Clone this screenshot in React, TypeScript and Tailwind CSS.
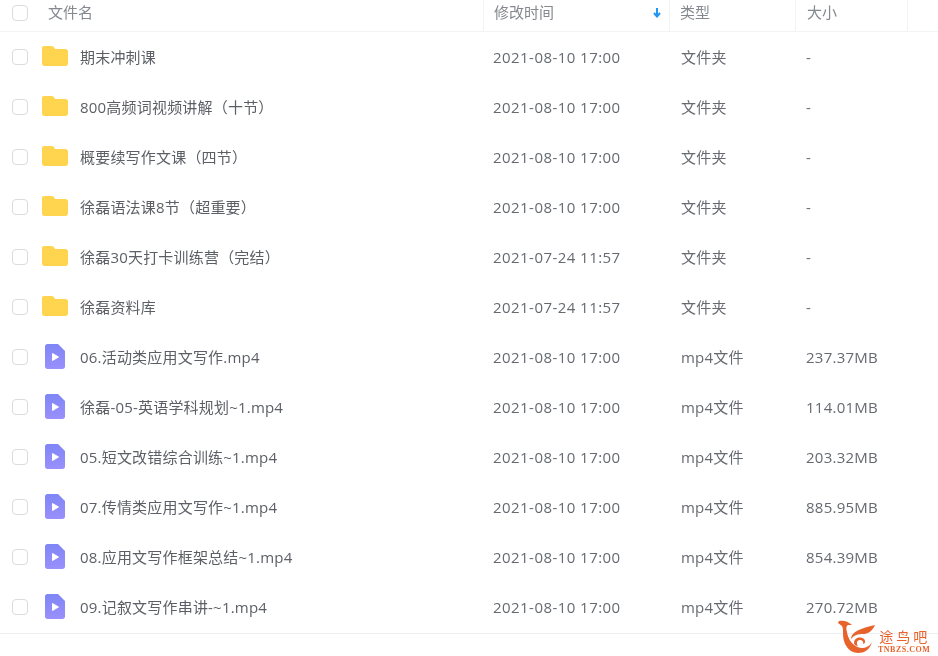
import React from "react";

type Row = {
  name: string;
  time: string;
  type: string;
  size: string;
  video?: boolean;
};

const rows: Row[] = [
  { name: "期末冲刺课", time: "2021-08-10 17:00", type: "文件夹", size: "-" },
  { name: "800高频词视频讲解（十节）", time: "2021-08-10 17:00", type: "文件夹", size: "-" },
  { name: "概要续写作文课（四节）", time: "2021-08-10 17:00", type: "文件夹", size: "-" },
  { name: "徐磊语法课8节（超重要）", time: "2021-08-10 17:00", type: "文件夹", size: "-" },
  { name: "徐磊30天打卡训练营（完结）", time: "2021-07-24 11:57", type: "文件夹", size: "-" },
  { name: "徐磊资料库", time: "2021-07-24 11:57", type: "文件夹", size: "-" },
  { name: "06.活动类应用文写作.mp4", time: "2021-08-10 17:00", type: "mp4文件", size: "237.37MB", video: true },
  { name: "徐磊-05-英语学科规划~1.mp4", time: "2021-08-10 17:00", type: "mp4文件", size: "114.01MB", video: true },
  { name: "05.短文改错综合训练~1.mp4", time: "2021-08-10 17:00", type: "mp4文件", size: "203.32MB", video: true },
  { name: "07.传情类应用文写作~1.mp4", time: "2021-08-10 17:00", type: "mp4文件", size: "885.95MB", video: true },
  { name: "08.应用文写作框架总结~1.mp4", time: "2021-08-10 17:00", type: "mp4文件", size: "854.39MB", video: true },
  { name: "09.记叙文写作串讲-~1.mp4", time: "2021-08-10 17:00", type: "mp4文件", size: "270.72MB", video: true },
];

const Check = () => (
  <div className="w-4 h-4 rounded-[4px] border border-[#dcdcdc] bg-white shrink-0" />
);

const FolderIcon = () => (
  <svg width="26" height="20" viewBox="0 0 26 20" className="shrink-0 -mt-[2px]">
    <path
      d="M2 0h7.500c1 0 1.700.4 2.300 1.100L13.300 3H23.500c1.400 0 2.500 1.100 2.500 2.500V17.500c0 1.400-1.100 2.500-2.500 2.500H2.500C1.100 20 0 18.900 0 17.500V2C0 .9.900 0 2 0z"
      fill="#ffd54f"
    />
  </svg>
);

const VideoIcon = () => (
  <svg width="20" height="25" viewBox="0 0 20 25" className="shrink-0 -mt-[1px]">
    <defs>
      <linearGradient id="vid" x1="0" y1="0" x2="0" y2="1">
        <stop offset="0" stopColor="#7f86f5" />
        <stop offset="1" stopColor="#9a90fb" />
      </linearGradient>
    </defs>
    <path
      d="M2.500 0H13l7 7v15.500c0 1.400-1.100 2.500-2.500 2.500h-15C1.100 25 0 23.900 0 22.500v-20C0 1.100 1.100 0 2.500 0z"
      fill="url(#vid)"
    />
    <path d="M7.500 9.500l6 3.500-6 3.500z" fill="#fff" stroke="#fff" strokeLinejoin="round" />
  </svg>
);

const Watermark = () => (
  <div className="absolute left-[837px] top-[620px] flex items-start">
    <svg width="41" height="34" viewBox="0 0 41 34" fill="#e8622c">
      <path d="M2 1C6 0 11 1 15 5L11 5C9 6 9 9 10 12C11 19 16 27 24 28C29 28 33 26 35 22C33 30 27 33 21 33C12 33 6 24 6 14C6 10 6 8 5 6L1 3z" />
      <path d="M14 19C14 12 24 8 38 5C35 12 30 14 26 14C21 14 17 15 14 19z" />
      <path d="M17 23C17 18 23 16 27 19C29 21 28 24 26 24C27 22 25 20 23 20C20 20 19 23 21 26C19 26 17 25 17 23z" />
    </svg>
    <div className="flex flex-col items-center gap-[2px] text-[#e8622c] mt-[10px]">
      <span className="text-[14px] tracking-[3px] leading-[14px] w-[50px] whitespace-nowrap">途鸟吧</span>
      <span className="font-['Liberation_Serif',serif] font-bold text-[8px] tracking-[0.5px] leading-[8px] whitespace-nowrap">
        TNBZS.COM
      </span>
    </div>
  </div>
);

export default function App() {
  return (
    <div className="relative w-[938px] h-[656px] bg-white overflow-hidden blur-[0.35px] text-[15px] text-[#666a70] font-['Open_Sans','Noto_Sans_CJK_SC',sans-serif]">
      <div className="flex h-[32px] border-b border-[#f2f3f5] text-[#85898f]">
        <div className="flex items-center w-[483px] pl-3 h-[25px]">
          <Check />
          <span className="ml-5">文件名</span>
        </div>
        <div className="flex items-center justify-between w-[187px] pl-[10px] pr-[7px] h-[31px] pb-[6px] border-x border-[#f2f3f5]">
          <span>修改时间</span>
          <svg width="10" height="11" viewBox="0 0 10 11">
            <path d="M5 1v8M2 6l3 3.500L8 6" fill="none" stroke="#2196f3" strokeWidth="2" />
          </svg>
        </div>
        <div className="flex items-center w-[125px] pl-[10px] h-[31px] pb-[6px]">类型</div>
        <div className="flex items-center w-[113px] pl-[11px] h-[31px] pb-[6px] border-x border-[#f2f3f5]">大小</div>
      </div>
      <div className="border-b border-[#eeeff1] pb-[1px]">
        {rows.map((row) => (
          <div key={row.name} className="flex items-center h-[50px]">
            <div className="flex items-center w-[483px] pl-3">
              <Check />
              <div className="w-[26px] ml-[14px] flex justify-center">
                {row.video ? <VideoIcon /> : <FolderIcon />}
              </div>
              <span className="ml-3 text-[#5c6066] tracking-[0.2px]">{row.name}</span>
            </div>
            <div className="w-[198px] pl-[10px] tracking-[0.45px]">{row.time}</div>
            <div className="w-[125px] tracking-[0.2px]">{row.type}</div>
            <div className="tracking-[0.25px]">{row.size}</div>
          </div>
        ))}
      </div>
      <Watermark />
    </div>
  );
}
